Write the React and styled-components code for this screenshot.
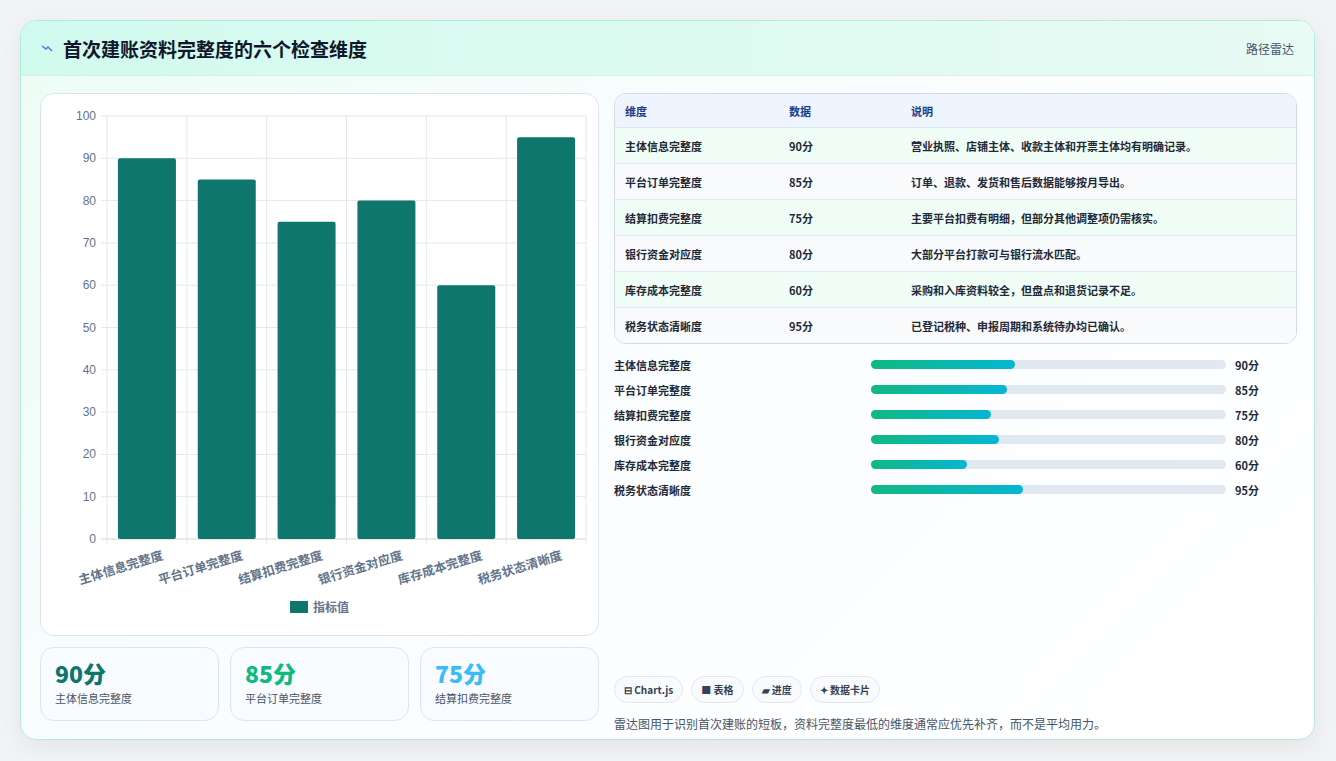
import React from "react";
import styled, { createGlobalStyle } from "styled-components";

const G = createGlobalStyle`
  body{margin:0;background:#f1f3f4;font-family:"Noto Sans CJK SC","Noto Sans",sans-serif;}
`;
const data = [
  ["主体信息完整度", 90, "营业执照、店铺主体、收款主体和开票主体均有明确记录。"],
  ["平台订单完整度", 85, "订单、退款、发货和售后数据能够按月导出。"],
  ["结算扣费完整度", 75, "主要平台扣费有明细，但部分其他调整项仍需核实。"],
  ["银行资金对应度", 80, "大部分平台打款可与银行流水匹配。"],
  ["库存成本完整度", 60, "采购和入库资料较全，但盘点和退货记录不足。"],
  ["税务状态清晰度", 95, "已登记税种、申报周期和系统待办均已确认。"],
];
const Page = styled.div`padding:20px 21px 20px 20px;`;
const Card = styled.div`
  width:1295px;height:720px;box-sizing:border-box;border:1px solid #b5eadb;border-radius:16px;
  background:linear-gradient(135deg,#ecfdf5,#fafdff 45%,#ffffff);overflow:hidden;
  box-shadow:0 8px 24px rgba(0,0,0,.06);display:flex;flex-direction:column;
`;
const Header = styled.div`
  height:55px;box-sizing:border-box;display:flex;align-items:center;justify-content:space-between;
  padding:0 20px;background:linear-gradient(90deg,#d1faee,#e8fbf4);border-bottom:1px solid #d5efe6;
`;
const Title = styled.h1`margin:0;font-size:19px;font-weight:700;color:#0f172a;display:flex;align-items:center;gap:10px;`;
const Tag = styled.span`font-size:12px;color:#475569;`;
const Body = styled.div`display:grid;grid-template-columns:559px 683px;gap:15px;padding:17px 19px 0 19px;`;
const Col = styled.div`display:flex;flex-direction:column;`;
const ChartBox = styled.div`height:543px;box-sizing:border-box;border:1px solid #dbe4ee;border-radius:14px;background:#fff;`;
const Stats = styled.div`display:grid;grid-template-columns:repeat(3,1fr);gap:11px;margin-top:11px;`;
const Stat = styled.div`height:74px;box-sizing:border-box;border:1px solid #dbe6f3;border-radius:14px;background:#f8fbff;padding:10px 14px;`;
const Num = styled.div`font-size:23px;font-weight:800;color:${p=>p.c};line-height:30px;`;
const Lab = styled.div`font-size:11px;color:#475569;margin-top:2px;`;
const Table = styled.div`border:1px solid #cfdbe8;border-radius:12px;overflow:hidden;background:#fff;`;
const Row = styled.div`
  display:grid;grid-template-columns:164px 122px 1fr;height:${p=>p.h}px;align-items:center;padding-left:10px;
  font-size:11px;font-weight:${p=>p.head?700:600};color:${p=>p.head?"#1e3a8a":"#1f2937"};
  background:${p=>p.head?"#eef5ff":p.alt?"#f8fafc":"#f0fdf6"};border-top:${p=>p.first?"none":"1px solid #dfe7ef"};
`;
const Bars = styled.div`display:flex;flex-direction:column;gap:8px;margin-top:12px;`;
const BarRow = styled.div`display:grid;grid-template-columns:257px 355px 1fr;align-items:center;height:17px;font-size:11px;font-weight:600;color:#1f2937;`;
const Track = styled.div`height:9px;border-radius:5px;background:#e2e8f0;margin-left:0;`;
const Fill = styled.div`height:100%;border-radius:5px;background:linear-gradient(90deg,#10b981,#06b6d4);`;
const Val = styled.span`padding-left:9px;font-weight:700;`;
const Chips = styled.div`display:flex;gap:8px;margin-top:178px;`;
const Chip = styled.div`height:27px;box-sizing:border-box;padding:0 9px;border:1px solid #e2e8f0;border-radius:14px;background:#f8fafc;font-size:10px;font-weight:600;color:#334155;display:flex;align-items:center;gap:3px;`;
const Note = styled.p`margin:12px 0 0;font-size:12px;color:#475569;`;

function Chart(){
  const x0=66,y0=22,w=479,h=423,cw=w/6;
  const y=v=>y0+h-(v/100)*h;
  return (
    <svg width="557" height="541" style={{display:"block"}}>
      {Array.from({length:11},(_,i)=>i*10).map(v=>(
        <g key={v}>
          <line x1={x0-6} x2={x0+w} y1={y(v)} y2={y(v)} stroke={v===0?"#cbd5e1":"#e5e7eb"}/>
          <text x={x0-11} y={y(v)+4} fontSize="12" fill="#64748b" textAnchor="end" fontFamily="Liberation Sans, sans-serif">{v}</text>
        </g>))}
      {Array.from({length:7},(_,i)=>(
        <line key={i} x1={x0+i*cw} x2={x0+i*cw} y1={y0} y2={y0+h+6} stroke="#e5e7eb"/>))}
      {data.map(([n,v],i)=>{
        const cx=x0+i*cw+cw/2;
        return <g key={n}>
          <rect x={cx-29} y={y(v)} width="58" height={y(0)-y(v)} rx="2" fill="#0f766e"/>
          <text transform={`translate(${cx+17},${y0+h+20}) rotate(-17)`} textAnchor="end" fontSize="12.5" fontWeight="600" fill="#64748b">{n}</text>
        </g>;})}
      <rect x="249" y="507" width="18" height="12" fill="#0f766e"/>
      <text x="272" y="518" fontSize="12" fontWeight="600" fill="#64748b">指标值</text>
    </svg>);
}

export default function App(){
  const colors=["#0f766e","#10b981","#38bdf8"];
  return (<Page><G/><Card>
    <Header>
      <Title><svg width="12" height="8" viewBox="0 0 12 8"><path d="M1 2 L5 5 L7 3 L11 7" stroke="#3b82f6" strokeWidth="1.5" fill="none"/></svg>首次建账资料完整度的六个检查维度</Title>
      <Tag>路径雷达</Tag>
    </Header>
    <Body>
      <Col>
        <ChartBox><Chart/></ChartBox>
        <Stats>{data.slice(0,3).map(([n,v],i)=>(
          <Stat key={n}><Num c={colors[i]}>{v}分</Num><Lab>{n}</Lab></Stat>))}</Stats>
      </Col>
      <Col>
        <Table>
          <Row head first h={33}><span>维度</span><span>数据</span><span>说明</span></Row>
          {data.map(([n,v,d],i)=>(
            <Row key={n} alt={i%2===1} h={35}><span>{n}</span><span>{v}分</span><span>{d}</span></Row>))}
        </Table>
        <Bars>{data.map(([n,v])=>(
          <BarRow key={n}><span>{n}</span><Track><Fill style={{width:v*1.6+"px"}}/></Track><Val>{v}分</Val></BarRow>))}</Bars>
        <Chips>
          <Chip>⊟ Chart.js</Chip><Chip>■ 表格</Chip><Chip>▰ 进度</Chip><Chip>✦ 数据卡片</Chip>
        </Chips>
        <Note>雷达图用于识别首次建账的短板，资料完整度最低的维度通常应优先补齐，而不是平均用力。</Note>
      </Col>
    </Body>
  </Card></Page>);
}
